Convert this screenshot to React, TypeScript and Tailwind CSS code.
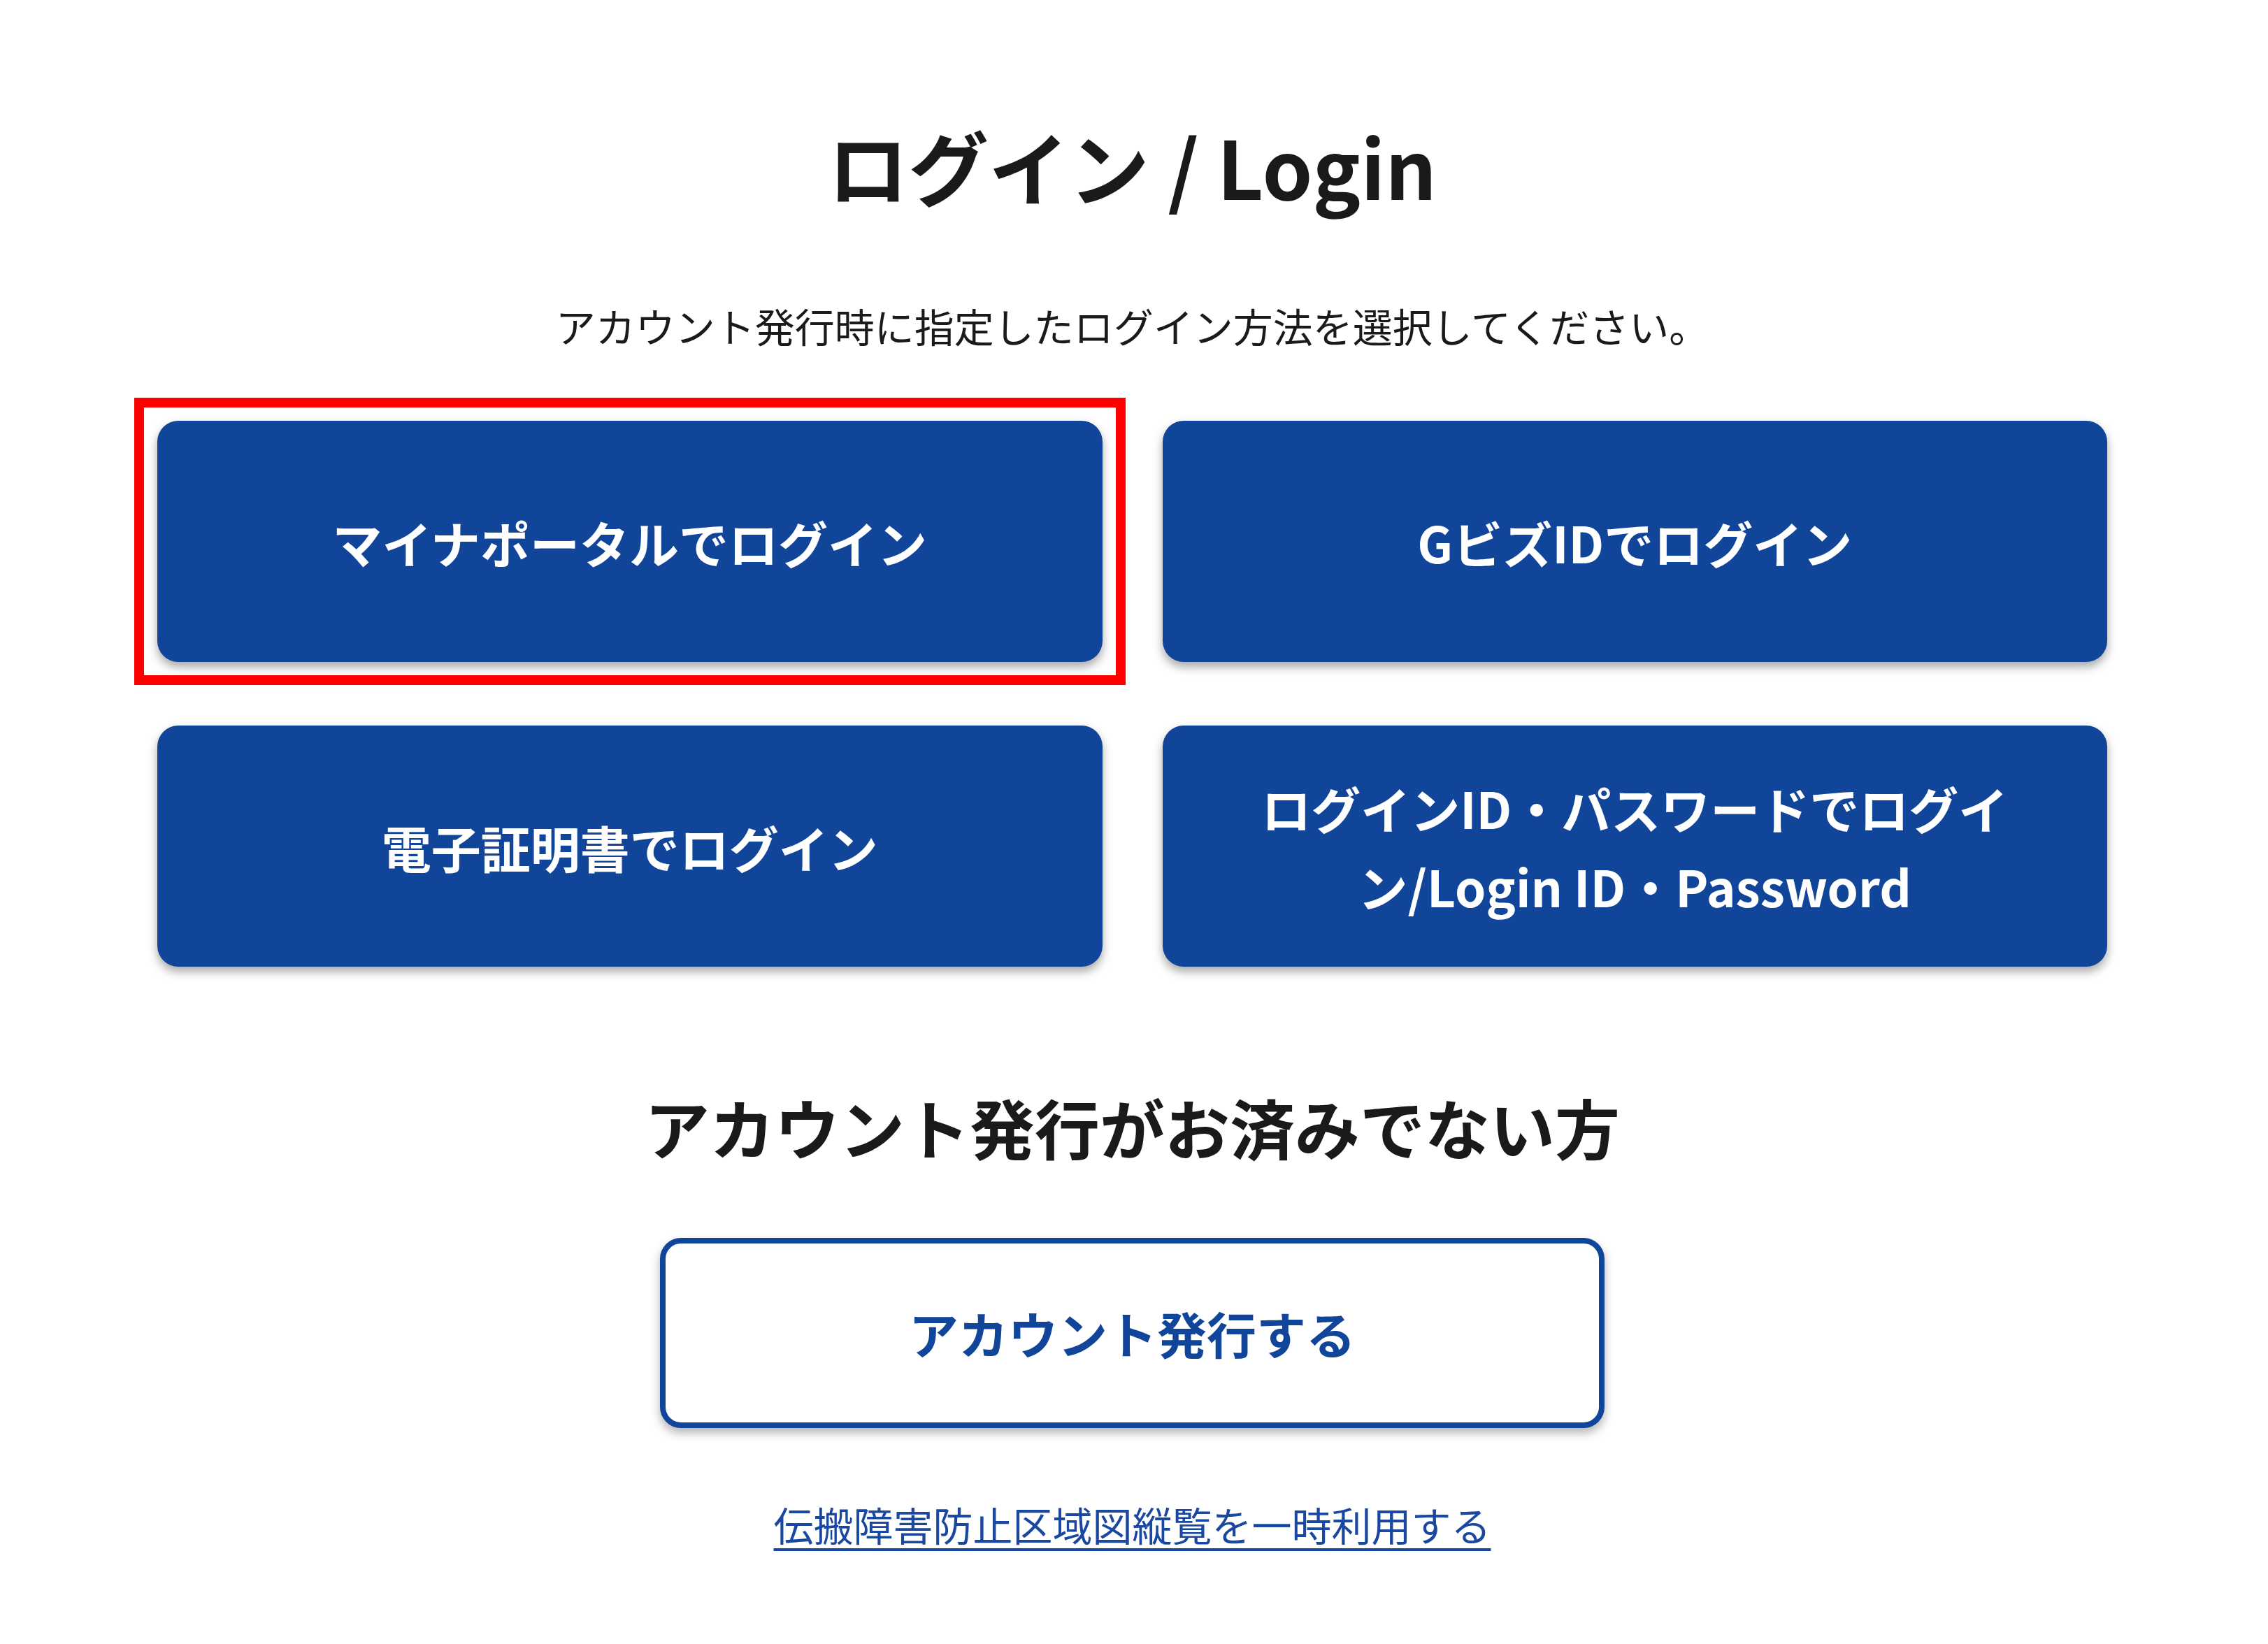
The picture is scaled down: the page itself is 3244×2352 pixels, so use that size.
import React from "react";

const font = { fontFamily: '"Noto Sans CJK JP", "Noto Sans", sans-serif' };

function BlueButton({ children }: { children: React.ReactNode }) {
  return (
    <button className="flex h-[345px] w-full items-center justify-center rounded-[30px] bg-[#10459a] px-10 text-center text-[71px] font-bold leading-[112px] text-white shadow-[0_7px_14px_rgba(0,0,0,0.35)]">
      <span>{children}</span>
    </button>
  );
}

export default function App() {
  return (
    <div className="min-h-[2352px] w-full bg-white text-[#1a1a1a]" style={font}>
      <div className="ml-[225px] flex w-[2789px] flex-col items-center">
        <h1 className="pt-[150px] text-[115px] font-bold leading-[1.5]">ログイン / Login</h1>
        <p className="mt-[100px] text-[57px] leading-[1.5]">
          アカウント発行時に指定したログイン方法を選択してください。
        </p>
        <div className="mt-[94px] grid w-full grid-cols-2 gap-x-[86px] gap-y-[91px]">
          <div className="-m-[33px] border-[14px] border-[#ff0000] p-[19px]">
            <BlueButton>マイナポータルでログイン</BlueButton>
          </div>
          <BlueButton>GビズIDでログイン</BlueButton>
          <BlueButton>電子証明書でログイン</BlueButton>
          <BlueButton>
            ログインID・パスワードでログイ
            <br />
            ン/Login ID・Password
          </BlueButton>
        </div>
        <h2 className="mt-[159px] text-[93px] font-bold leading-[1.5]">
          アカウント発行がお済みでない方
        </h2>
        <button className="mt-[89px] flex h-[272px] w-[1351px] items-center justify-center rounded-[30px] border-[8px] border-[#10459a] bg-white text-[71px] font-bold text-[#10459a] shadow-[0_7px_14px_rgba(0,0,0,0.3)]">
          アカウント発行する
        </button>
        <a
          href="#"
          className="mt-[95px] text-[57px] leading-[1.5] text-[#1a47a0] underline decoration-[4px] underline-offset-[10px]"
        >
          伝搬障害防止区域図縦覧を一時利用する
        </a>
      </div>
    </div>
  );
}
